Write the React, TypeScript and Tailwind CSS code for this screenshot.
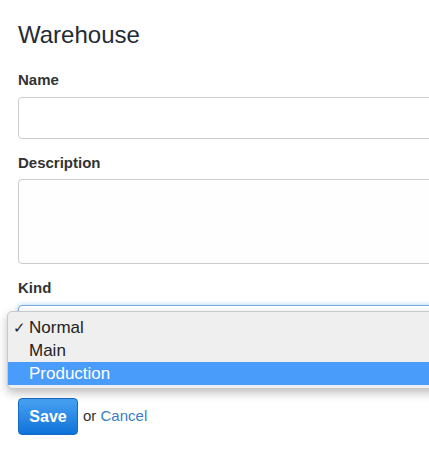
import { useState } from "react";

const kinds = ["Normal", "Main", "Production"];

export default function App() {
  const [selected] = useState("Normal");
  const [hovered] = useState("Production");

  return (
    <div
      className="w-screen h-screen overflow-hidden bg-white text-[#333]"
      style={{ fontFamily: '"Liberation Sans", Arial, sans-serif' }}>
      <div className="w-[460px] pl-[18px] pt-[22px]">
        <h1 className="text-[24px] leading-[26px] text-[#252b36]">Warehouse</h1>

        <div className="mt-[22px] mb-[14px]">
          <label className="block text-[15px] leading-[20px] font-bold mb-[7px]">
            Name
          </label>
          <input
            type="text"
            className="block w-full h-[42px] border border-[#cccccc] rounded-[4px] bg-white"
          />
        </div>

        <div className="mb-[14px]">
          <label className="block text-[15px] leading-[20px] font-bold mb-[6px]">
            Description
          </label>
          <textarea className="block w-full h-[85px] border border-[#cccccc] rounded-[4px] bg-[#fefefe] resize-none" />
        </div>

        <div className="relative">
          <label className="block text-[15px] leading-[20px] font-bold mb-[7px]">
            Kind
          </label>
          <div className="relative">
            <div className="h-[42px] w-full border border-[#7aaee0] rounded-[4px] bg-white shadow-[0_0_5px_rgba(102,175,233,0.6)]" />
            <ul className="absolute top-[6px] left-[-11px] w-[460px] pt-[4px] pb-[3px] bg-[#efefef] border border-[#c9c9c9] rounded-[5px] shadow-[0_4px_10px_rgba(0,0,0,0.25)] text-[17px] text-[#222]">
              {kinds.map((k) => (
                <li
                  key={k}
                  className={`relative h-[23px] leading-[23px] pl-[21px] ${
                    k === hovered ? "bg-[#4a9cfa] text-white" : ""
                  }`}>
                  {k === selected && (
                    <span className="absolute left-[5px] top-0 text-[15px]">✓</span>
                  )}
                  {k}
                </li>
              ))}
            </ul>
          </div>
        </div>

        <div className="mt-[51px] flex items-center gap-[5px] text-[15px]">
          <button className="w-[60px] h-[37px] rounded-[4px] border border-[#1669c4] bg-gradient-to-b from-[#47a2f2] to-[#0b72d8] text-white font-bold text-[16px]">
            Save
          </button>
          <span>
            or <a className="text-[#3a7dc4]">Cancel</a>
          </span>
        </div>
      </div>
    </div>
  );
}
